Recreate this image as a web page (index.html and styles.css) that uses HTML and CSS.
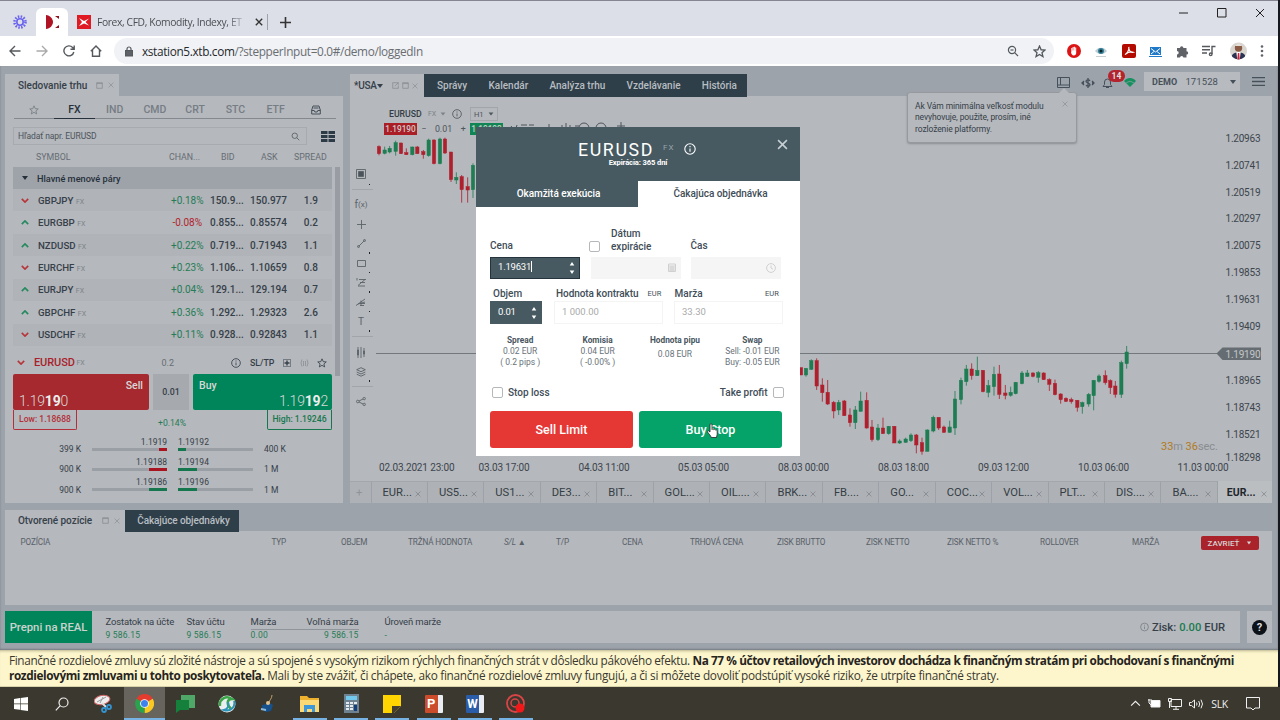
FILE: index.html
```html
<!DOCTYPE html>
<html lang="sk">
<head>
  <meta charset="UTF-8">
  <title>xStation 5</title>
  <link rel="stylesheet" href="styles.css">
</head>
<body>
  <!-- Shared icons -->
  <svg class="defs">
    <symbol id="i-info" viewBox="0 0 12 12"><circle cx="6" cy="6" r="5.2"/><path d="M6 5.4v3.4M6 3v1.2"/></symbol>
    <symbol id="i-x" viewBox="0 0 10 10"><path d="M1 1l8 8M9 1l-8 8"/></symbol>
    <symbol id="i-max" viewBox="0 0 10 10"><path d="M1 1h8v8H1zM1 2.2h8"/></symbol>
    <symbol id="i-up" viewBox="0 0 10 6"><path d="M1 5l4-4 4 4"/></symbol>
    <symbol id="i-down" viewBox="0 0 10 6"><path d="M1 1l4 4 4-4"/></symbol>
    <symbol id="i-star" viewBox="0 0 12 12"><path d="M6 1l1.5 3.4 3.6.3-2.8 2.4.9 3.6L6 8.8l-3.200 1.900.9-3.600L.9 4.700l3.600-.3z"/></symbol>
    <symbol id="i-find" viewBox="0 0 12 12"><circle cx="5" cy="5" r="3.600"/><path d="M7.700 7.700L11 11"/></symbol>
  </svg>

  <div class="browser">
    <div class="tabstrip">
      <div class="pin"><svg width="14" height="14" viewBox="-7 -7 14 14" fill="none" stroke="#6a63ee" stroke-width="1.600"><circle r="3.200"/><circle r="5.500" stroke-dasharray="1.500 1.380" stroke-width="2.600"/></svg></div>
      <div class="tab-active"><svg width="15" height="14" viewBox="0 0 15 14" stroke="none"><path d="M1 0c4 0 7 4 7 7s-3 7-7 7z" fill="#b01324"/><path d="M10 1h4v3zM10 13h4v-3z" fill="#8e1322"/></svg></div>
      <div class="tab">
        <svg width="14" height="14" viewBox="0 0 14 14" stroke="none"><path fill="#e01a22" d="M0 0h14v14H0z"/><path fill="#fff" d="M2 3l5 3 5-2.500L8.500 7l3.500 3.500L7 8.500 2 11l3-4z"/></svg>
        <span class="tab-title">Forex, CFD, Komodity, Indexy, ET</span>
        <svg class="tab-close" width="8" height="8"><use href="#i-x"/></svg>
      </div>
      <svg class="tab-new" width="11" height="11" viewBox="0 0 11 11"><path d="M5.500 0v11M0 5.500h11"/></svg>
      <div class="win-controls">
        <svg width="10" height="10" viewBox="0 0 10 10"><path d="M0 5h9"/></svg>
        <svg width="10" height="10" viewBox="0 0 10 10"><path d="M.5.5h8.500v8.500H.5z"/></svg>
        <svg width="10" height="10"><use href="#i-x"/></svg>
      </div>
    </div>
    <div class="toolbar">
      <svg width="12" height="12" viewBox="0 0 12 12"><path d="M11.500 6H1M6 1L1 6l5 5"/></svg>
      <svg class="off" width="12" height="12" viewBox="0 0 12 12"><path d="M.5 6H11M6 1l5 5-5 5"/></svg>
      <svg width="12" height="12" viewBox="0 0 12 12"><path d="M10.800 7A5 5 0 1 1 9.600 2.500L11 4M11.200.5V4.300H7.500"/></svg>
      <svg width="12" height="12" viewBox="0 0 12 12"><path d="M.8 6.300L6 1l5.200 5.300M2.500 5v6.200h7V5"/></svg>
      <div class="omnibox">
        <svg width="8" height="11" viewBox="0 0 8 11"><path d="M.5 4.500h7v5.500h-7z" fill="#5f6368"/><path d="M2 4.500V3a2 2 0 0 1 4 0v1.500"/></svg>
        <span class="url"><b>xstation5.xtb.com</b>/?stepperInput=0.0#/demo/loggedIn</span>
        <svg width="12" height="12" viewBox="0 0 12 12"><use href="#i-find"/><path d="M3.500 5h3"/></svg>
        <svg width="13" height="13"><use href="#i-star"/></svg>
      </div>
      <div class="extensions">
        <svg width="14" height="14" viewBox="0 0 14 14" stroke="none"><circle cx="7" cy="7" r="7" fill="#dc1414"/><path fill="#fff" d="M4.300 8V4h1v2.500h.3V3h1v3.500h.3V2.800h1v3.700h.3V3.500h1V9c0 1.500-1 2.500-2.500 2.500S4.300 10 4 8z"/></svg>
        <svg width="14" height="14" viewBox="0 0 14 14" stroke="none"><path fill="#b9ccd4" d="M1 7c3-4.500 9-4.500 12 0-3 4-9 4-12 0z"/><circle cx="7" cy="7" r="3" fill="#317f98"/><circle cx="7" cy="7" r="1.500" fill="#122"/><path fill="#c8cfd2" d="M2 12h10v1H2z"/></svg>
        <svg width="14" height="14" viewBox="0 0 14 14"><rect width="14" height="14" rx="2" fill="#b30b00" stroke="none"/><path stroke="#fff" stroke-width="1.200" d="M3 10.500c2-.5 4.500-5 3.800-7.500-.5 3 2 6 4.500 5.200-2-.6-5.300 0-8.300 2.300z"/></svg>
        <svg width="13" height="12" viewBox="0 0 13 12"><path fill="#1f78c8" stroke="none" d="M1 2h11v8H1zM0 11h13v1H0z"/><path stroke="#fff" stroke-width="1" d="M2 3.500l4.500 3.500L11 3.500M2 9l3-2.500M11 9L8 6.500"/></svg>
        <svg width="13" height="13" viewBox="0 0 13 13" stroke="none"><path fill="#5f6368" d="M1 3h3a1.700 1.700 0 1 1 3.400 0h3.100v3.200a1.700 1.700 0 1 1 0 3.400v3H7.400a1.700 1.700 0 0 0-3.400 0H1V9.400a1.700 1.700 0 0 0 0-3.400z"/></svg>
        <svg width="14" height="12" viewBox="0 0 14 12"><path d="M0 1.500h8M0 4.700h8M0 8h5M10 9V1.500h3.500"/><circle cx="8.700" cy="9.300" r="1.300"/></svg>
        <svg width="17" height="18" viewBox="0 0 17 18" stroke="none"><clipPath id="av"><circle cx="8.500" cy="9" r="8.500"/></clipPath><g clip-path="url(#av)"><path fill="#d9d5cf" d="M0 0h17v18H0z"/><path fill="#2b3352" d="M1 18c0-6 3-7.500 7.500-7.500S16 12 16 18z"/><path fill="#fff" d="M6.300 10h4.400l-1 8H7.300z"/><path fill="#d01f36" d="M7.900 11h1.300l.6 7H7.200z"/><circle cx="8.500" cy="6" r="3.700" fill="#8a5a45"/><path fill="#e4e0dc" d="M5 4c1-3 6-3 7 0z"/></g></svg>
        <svg width="4" height="12" viewBox="0 0 4 12" stroke="none" fill="#5f6368"><circle cx="2" cy="1.500" r="1.300"/><circle cx="2" cy="6" r="1.300"/><circle cx="2" cy="10.500" r="1.300"/></svg>
      </div>
    </div>
  </div>

  <div class="app">
    <div class="workspace">
      <!-- Market watch -->
      <section class="market">
        <div class="panel-tab">Sledovanie trhu <svg width="7" height="7"><use href="#i-max"/></svg><svg width="6" height="6"><use href="#i-x"/></svg></div>
        <div class="panel market-panel">
          <div class="categories">
            <span><svg width="10" height="10"><use href="#i-star"/></svg></span>
            <span class="current">FX</span><span>IND</span><span>CMD</span><span>CRT</span><span>STC</span><span>ETF</span>
            <span class="inbox"><svg width="10" height="10" viewBox="0 0 10 10"><path d="M.7 5L2 1h6l1.300 4v4H.7zM.7 5.500h2.500l.7 1.500h2.200l.7-1.500h2.500M2.500 3h5"/></svg></span>
          </div>
          <div class="search-row">
            <div class="search">Hľadať napr. EURUSD <svg width="9" height="9"><use href="#i-find"/></svg></div>
            <svg width="14" height="11" viewBox="0 0 14 11" stroke="none"><path fill="#2c3b46" d="M0 0h6.500v3H0zM7.500 0H14v3H7.500zM0 4h6.500v3H0zM7.500 4H14v3H7.500zM0 8h6.500v3H0zM7.500 8H14v3H7.500z"/></svg>
          </div>
          <div class="list-head"><span>SYMBOL</span><span>CHAN...</span><span>BID</span><span>ASK</span><span>SPREAD</span></div>
          <div class="list-wrap">
            <div class="list">
              <div class="group"><i class="caret"></i>Hlavné menové páry</div>
              <div class="row"><svg class="dn"><use href="#i-down"/></svg><span>GBPJPY <small>FX</small></span><span class="pos">+0.18%</span><span>150.9...</span><span>150.977</span><span>1.9</span></div>
              <div class="row"><svg class="up"><use href="#i-up"/></svg><span>EURGBP <small>FX</small></span><span class="neg">-0.08%</span><span>0.855...</span><span>0.85574</span><span>0.2</span></div>
              <div class="row"><svg class="up"><use href="#i-up"/></svg><span>NZDUSD <small>FX</small></span><span class="pos">+0.22%</span><span>0.719...</span><span>0.71943</span><span>1.1</span></div>
              <div class="row"><svg class="dn"><use href="#i-down"/></svg><span>EURCHF <small>FX</small></span><span class="pos">+0.23%</span><span>1.106...</span><span>1.10659</span><span>0.8</span></div>
              <div class="row"><svg class="up"><use href="#i-up"/></svg><span>EURJPY <small>FX</small></span><span class="pos">+0.04%</span><span>129.1...</span><span>129.194</span><span>0.7</span></div>
              <div class="row"><svg class="up"><use href="#i-up"/></svg><span>GBPCHF <small>FX</small></span><span class="pos">+0.36%</span><span>1.292...</span><span>1.29323</span><span>2.6</span></div>
              <div class="row"><svg class="dn"><use href="#i-down"/></svg><span>USDCHF <small>FX</small></span><span class="pos">+0.11%</span><span>0.928...</span><span>0.92843</span><span>1.1</span></div>
              <div class="selected">
                <svg class="dn"><use href="#i-down"/></svg><b>EURUSD</b><small>FX</small><span class="sel-spread">0.2</span>
                <svg width="10" height="10"><use href="#i-info"/></svg><span class="sltp">SL/TP</span>
                <svg width="8" height="8" viewBox="0 0 8 8"><path d="M.5.5h7v7h-7z" stroke-dasharray="1 1"/><path d="M4 1.500v5M1.500 4h5" stroke-width="1.400"/></svg>
                <svg class="faint" width="9" height="8" viewBox="0 0 9 8"><path d="M2 .5Q0 4 2 7.500M7 .5q2 3.500 0 7M3.500 2v5M5.500 2v5"/></svg>
                <svg width="10" height="10"><use href="#i-star"/></svg>
              </div>
            </div>
            <div class="scrollbar"></div>
          </div>
          <div class="ticket">
            <div class="side sell"><span>Sell</span><em>1.19<b>19</b>0</em></div>
            <div class="lots">0.01</div>
            <div class="side buy"><span>Buy</span><em>1.19<b>19</b>2</em></div>
          </div>
          <div class="range"><span class="low">Low: 1.18688</span><span class="day">+0.14%</span><span class="high">High: 1.19246</span></div>
          <div class="depth">
            <div class="level"><span>399 K</span><div class="bar ask"><span>1.1919</span><i class="r" style="width:8px"></i></div><div class="bar"><span>1.19192</span><i style="width:8px"></i></div><span>400 K</span></div>
            <div class="level"><span>900 K</span><div class="bar ask"><span>1.19188</span><i class="r" style="width:18px"></i></div><div class="bar"><span>1.19194</span><i style="width:19px"></i></div><span>1 M</span></div>
            <div class="level"><span>900 K</span><div class="bar ask"><span>1.19186</span><i style="width:18px"></i></div><div class="bar"><span>1.19196</span><i style="width:19px"></i></div><span>1 M</span></div>
          </div>
        </div>
      </section>

      <!-- Chart -->
      <section class="chart">
        <div class="chart-top">
          <div class="panel-tab usa">*USA<i class="caret"></i><svg width="7" height="7" viewBox="0 0 10 10"><path d="M6 1H1v8h8V5M4 6l5-5M6 1h3v3"/></svg><svg width="7" height="7"><use href="#i-max"/></svg><svg width="6" height="6"><use href="#i-x"/></svg></div>
          <nav class="menu"><span>Správy</span><span>Kalendár</span><span>Analýza trhu</span><span>Vzdelávanie</span><span>História</span></nav>
          <div class="account">
            <svg width="13" height="11" viewBox="0 0 13 11"><path d="M.5.5h12v10H.5zM3.500.5v7.500M.5 8h12"/></svg>
            <svg width="14" height="12" viewBox="0 0 14 12"><path d="M3 4L1 6l2 2M11 4l2 2-2 2M9 3.800C8 2.300 5 2.500 5 4.300s4 1.600 4 3.500S6 9.700 5 8.200M7 1v10M1 6h2M11 6h2" stroke-width="1.300"/></svg>
            <div class="bell"><svg width="11" height="12" viewBox="0 0 11 12"><path d="M1 9.500h9L8.500 7.500V5a3 3 0 0 0-6 0v2.500zM4 10.500h3"/></svg><span class="badge">14</span></div>
            <svg class="wifi" width="12" height="9" viewBox="0 0 12 9" stroke="none"><path fill="#159160" d="M0 3c3-4 9-4 12 0L6 9z"/><path d="M2.300 4.700q3.700-3 7.400 0" fill="none" stroke="#9da3ab" stroke-width=".7"/></svg>
            <div class="account-box"><b>DEMO</b><span>171528</span><i class="caret"></i></div>
            <svg class="burger" width="13" height="9" viewBox="0 0 13 9"><path d="M0 .7h13M0 4.500h13M0 8.300h13"/></svg>
          </div>
        </div>
        <div class="panel chart-panel">
          <div class="chart-body">
            <div class="draw-tools">
              <span class="first more"><svg width="10" height="10" viewBox="0 0 10 10"><path d="M.5.5h9v9h-9z"/><path d="M2.500 2.500h5v5h-5z" fill="#4c545b"/></svg></span>
              <hr>
              <span class="fx">f<small>(x)</small></span>
              <span><svg width="9" height="9" viewBox="0 0 9 9"><path d="M4.500 0v9M0 4.500h9"/></svg></span>
              <span class="more"><svg width="9" height="9" viewBox="0 0 9 9"><path d="M1.500 7.500l6-6"/><circle cx="1.500" cy="7.500" r="1"/><circle cx="7.500" cy="1.500" r="1"/></svg></span>
              <span class="more"><svg width="9" height="7" viewBox="0 0 9 7"><path d="M.5.5h8v6h-8z"/></svg></span>
              <span class="more"><svg width="10" height="9" viewBox="0 0 10 9"><path d="M1 0v2.500M3 1.500h7M9 1.500L2 7.500M4 4.500h5M2 8h7"/></svg></span>
              <span class="more"><svg width="10" height="9" viewBox="0 0 10 9"><path d="M0 7.500L9 1M2 6l7-2M4 5.500h5M4 7.500h4M5 2.500v5"/></svg></span>
              <span class="more t">T</span>
              <hr>
              <span><svg width="10" height="11" viewBox="0 0 10 11"><path d="M2 0v11M5 0v11M8 1v9"/><path d="M1.500 3h1v5h-1zM7.500 4h1v3h-1z"/></svg></span>
              <span class="more"><svg width="10" height="10" viewBox="0 0 10 10"><path d="M5 .7l4.300 2L5 4.700l-4.300-2zM.7 5L5 7l4.300-2M.7 7.200l4.300 2 4.300-2"/></svg></span>
              <hr>
              <span><svg width="10" height="9" viewBox="0 0 10 9"><circle cx="1.800" cy="4.500" r="1.300"/><circle cx="8.200" cy="1.600" r="1.200"/><circle cx="8.200" cy="7.400" r="1.200"/><path d="M3 4l4-2M3 5l4 2"/></svg></span>
            </div>
            <svg class="plot" id="plot" width="896" height="385" viewBox="376 96 896 385">
              <path class="price-line" d="M376 353.500H1222"/>
              <path class="price-tag" d="M1216.500 353.500l6-6H1261v12.500h-38.500z"/>
            </svg>
            <div class="chart-head">
              <div class="chart-symbol"><b>EURUSD</b><small>FX</small><i class="caret"></i><svg width="10" height="10"><use href="#i-info"/></svg><span class="interval">H1<i class="caret"></i></span></div>
              <div class="quick"><span class="q-sell">1.19190</span><span>−</span><span class="q-lots">0.01</span><span>+</span><span class="q-buy">1.19192</span>
                <svg width="120" height="12" viewBox="0 0 120 12"><path d="M2 4l4 5 2-6M12 3h6M20 3h5M40 2v8M53 3v8M57 1v8M61 3v5M66 4h4"/><circle cx="75" cy="6" r="5"/><circle cx="92" cy="6" r="5"/><path d="M112 0v10M108 4h8"/></svg>
              </div>
            </div>
          </div>
          <div class="chart-tabs">
            <span class="add">+</span>
            <span>EUR...<svg><use href="#i-x"/></svg></span><span>US5...<svg><use href="#i-x"/></svg></span><span>US1...<svg><use href="#i-x"/></svg></span><span>DE3...<svg><use href="#i-x"/></svg></span><span>BIT...<svg><use href="#i-x"/></svg></span><span>GOL...<svg><use href="#i-x"/></svg></span><span>OIL....<svg><use href="#i-x"/></svg></span><span>BRK...<svg><use href="#i-x"/></svg></span><span>FB....<svg><use href="#i-x"/></svg></span><span>GO...<svg><use href="#i-x"/></svg></span><span>COC...<svg><use href="#i-x"/></svg></span><span>VOL...<svg><use href="#i-x"/></svg></span><span>PLT...<svg><use href="#i-x"/></svg></span><span>DIS....<svg><use href="#i-x"/></svg></span><span>BA....<svg><use href="#i-x"/></svg></span><span class="on">EUR...<svg><use href="#i-x"/></svg></span>
          </div>
        </div>
      </section>
    </div>

    <!-- Positions -->
    <section class="positions">
      <div class="pos-tabs"><div class="panel-tab">Otvorené pozície <svg width="7" height="7"><use href="#i-max"/></svg><svg width="6" height="6"><use href="#i-x"/></svg></div><div class="pending">Čakajúce objednávky</div></div>
      <div class="panel pos-head">
        <span>POZÍCIA</span><span>TYP</span><span>OBJEM</span><span>TRŽNÁ HODNOTA</span><span><i>S/L</i> ▲</span><span>T/P</span><span>CENA</span><span>TRHOVÁ CENA</span><span>ZISK BRUTTO</span><span>ZISK NETTO</span><span>ZISK NETTO %</span><span>ROLLOVER</span><span>MARŽA</span><button>ZAVRIEŤ<i class="caret"></i></button>
      </div>
    </section>

    <footer class="status">
      <div class="panel balance">
        <div class="real">Prepni na REAL</div>
        <div class="stat s1"><span>Zostatok na účte</span><em>9 586.15</em></div>
        <div class="stat s2"><span>Stav účtu</span><em>9 586.15</em></div>
        <div class="stat s3"><span>Marža</span><em>0.00</em></div>
        <div class="stat s4"><span>Voľná marža</span><em>9 586.15</em></div>
        <div class="stat s5"><span>Úroveň marže</span><em>-</em></div>
        <div class="profit"><svg width="9" height="10"><use href="#i-info"/></svg>Zisk: <em>0.00</em> EUR</div>
      </div>
      <div class="panel help"><b>?</b></div>
    </footer>

    <div class="tooltip">Ak Vám minimálna veľkosť modulu<br>nevyhovuje, použite, prosím, iné<br>rozloženie platformy.<svg width="6" height="6"><use href="#i-x"/></svg></div>

    <!-- Order window -->
    <div class="modal">
      <header>
        <div class="title"><h1>EURUSD</h1><small>FX</small><svg width="12" height="12"><use href="#i-info"/></svg></div>
        <p>Expirácia: 365 dní</p>
        <svg class="close" width="11" height="11"><use href="#i-x"/></svg>
      </header>
      <div class="modal-tabs"><span>Okamžitá exekúcia</span><span class="on">Čakajúca objednávka</span></div>
      <div class="form">
        <div class="labels l1"><label>Cena</label><i class="check"></i><label class="two">Dátum<br>expirácie</label><label>Čas</label></div>
        <div class="fields f1">
          <div class="input dark">1.19631<i class="text-cursor"></i><svg class="spin" width="6" height="14" viewBox="0 0 6 14" stroke="none" fill="#fff"><path d="M3 1l2.300 3.500H.7zM3 13L.7 9.500h4.600z"/></svg></div>
          <div class="input off"><svg width="8" height="9" viewBox="0 0 8 9"><path d="M.5 1h7v7.500h-7zM.5 3h7M.5 5h7M.5 7h7M3 3v5M5 3v5"/></svg></div>
          <div class="input off"><svg width="10" height="10" viewBox="0 0 10 10"><circle cx="5" cy="5" r="4.400"/><path d="M5 2.500V5l2 1.300"/></svg></div>
        </div>
        <div class="labels l2"><label>Objem</label><label>Hodnota kontraktu</label><small>EUR</small><label>Marža</label><small>EUR</small></div>
        <div class="fields f2">
          <div class="input dark">0.01<svg class="spin" width="6" height="14" viewBox="0 0 6 14" stroke="none" fill="#fff"><path d="M3 1l2.300 3.500H.7zM3 13L.7 9.500h4.600z"/></svg></div>
          <div class="input ro">1 000.00</div>
          <div class="input ro">33.30</div>
        </div>
        <div class="costs">
          <div><b>Spread</b><span>0.02 EUR</span><span>( 0.2 pips )</span></div>
          <div><b>Komisia</b><span>0.04 EUR</span><span>( -0.00% )</span></div>
          <div class="pip"><b>Hodnota pipu</b><span>0.08 EUR</span></div>
          <div><b>Swap</b><span>Sell: -0.01 EUR</span><span>Buy: -0.05 EUR</span></div>
        </div>
        <div class="stops"><i class="check"></i><label>Stop loss</label><label class="tp">Take profit</label><i class="check"></i></div>
        <div class="actions"><button class="red">Sell Limit</button><button class="green">Buy Stop</button></div>
      </div>
      <svg class="hand" width="11" height="16" viewBox="0 0 11 16" fill="#fff" stroke="#222"><path d="M3 9V1.800a1 1 0 0 1 2 0V6.500c.3-.8 1.700-.7 1.800.2.4-.7 1.600-.5 1.700.4.500-.5 1.700-.2 1.700.8v3.500c0 1-.7 1.600-.7 3.100H4.200c0-1.500-2.800-4-3.700-5.500-.5-1 .6-1.700 1.400-.9z"/></svg>
    </div>
  </div>

  <div class="disclaimer">
    <p class="d1">Finančné rozdielové zmluvy sú zložité nástroje a sú spojené s vysokým rizikom rýchlych finančných strát v dôsledku pákového efektu. <b>Na 77 % účtov retailových investorov dochádza k finančným stratám pri obchodovaní s finančnými</b></p>
    <p class="d2"><b>rozdielovými zmluvami u tohto poskytovateľa.</b> Mali by ste zvážiť, či chápete, ako finančné rozdielové zmluvy fungujú, a či si môžete dovoliť podstúpiť vysoké riziko, že utrpíte finančné straty.</p>
  </div>

  <div class="taskbar">
    <span><svg width="14" height="14" viewBox="0 0 14 14" fill="#fff" stroke="none"><path d="M0 2l6-.9v5.500H0zM6.600 1L14 0v6.600H6.600zM0 7.200h6v5.500L0 12zM6.600 7.200H14V14l-7.400-1z"/></svg></span>
    <span><svg width="14" height="14" viewBox="0 0 14 14" fill="none" stroke="#eee" stroke-width="1.200"><circle cx="8.500" cy="5.500" r="4.500"/><path d="M5.300 8.700L.8 13.300"/></svg></span>
    <span><svg width="18" height="20" viewBox="0 0 18 20" stroke="none"><ellipse cx="8" cy="6" rx="8" ry="4.500" fill="#eee" stroke="#c66" transform="rotate(-12 8 6)"/><path d="M3 8L12 3M6 9l3-6" stroke="#999"/><path d="M8 9l4 4" stroke="#ddd" stroke-width="2"/><g fill="none" stroke="#3393cf" stroke-width="1.800"><circle cx="10" cy="16" r="2"/><circle cx="15" cy="13" r="2"/></g></svg></span>
    <span class="open active"><svg width="19" height="19" viewBox="0 0 20 20" stroke="none"><path fill="#e33b2e" d="M10 10L1.500 5A10 10 0 0 1 18.700 5z"/><path fill="#f9c922" d="M10 10l8.700-5A10 10 0 0 1 10 20z"/><path fill="#2ba24c" d="M10 10v10A10 10 0 0 1 1.500 5z"/><circle cx="10" cy="10" r="4.600" fill="#fff"/><circle cx="10" cy="10" r="3.700" fill="#3f82ee"/></svg></span>
    <span><svg width="19" height="18" viewBox="0 0 19 18" stroke="none"><path fill="#50a868" d="M5 0h14v13H5z"/><path fill="#14803c" d="M0 5h13v10H4l-4 3z"/></svg></span>
    <span><svg width="18" height="18" viewBox="0 0 18 18" stroke="none"><circle cx="9" cy="9" r="8.500" fill="#e9eef0"/><path d="M2 11C1 4 8 0 14 4c-5 0-6 5-1 10" fill="none" stroke="#3aa648" stroke-width="2.500"/><path d="M16 6c2 6-4 11-10 9 4-1 5-4 4-8" fill="none" stroke="#2c94b8" stroke-width="2"/></svg></span>
    <span><svg width="16" height="18" viewBox="0 0 16 18" stroke="none"><path d="M12 0c0 4-3 5-3 8" stroke="#c9a26c" fill="none"/><path fill="#17518c" d="M2 10c3 0 4-2 6-3l5 3-2 6-5 1-4-3z"/><circle cx="8" cy="8" r="2" fill="#dfc28e"/><path d="M1 14l5 1" stroke="#8db9dc" stroke-width="2"/></svg></span>
    <span class="open"><svg width="19" height="16" viewBox="0 0 19 16" stroke="none"><path fill="#eeb02f" d="M0 0h7l2 2h10v14H0z"/><path fill="#fbd976" d="M0 4h19v12H0z"/><path fill="#3d97d8" d="M4 9h11v7h-3v-3H7v3H4z"/></svg></span>
    <span class="open"><svg width="15" height="19" viewBox="0 0 15 19" stroke="none"><path fill="#6d8190" d="M0 0h15v19H0z"/><path fill="#72c8ed" d="M2 2h11v4H2z"/><path fill="#e3e9ec" d="M2 8h3v2H2zM6 8h3v2H6zM10 8h3v2h-3zM2 11h3v2H2zM6 11h3v2H6zM2 14h3v2H2zM6 14h3v2H6z"/><path fill="#123f78" d="M10 11h3v6h-3z"/></svg></span>
    <span class="open"><svg width="18" height="18" viewBox="0 0 18 18" stroke="none"><path fill="#ffd400" d="M0 0h18v11l-7 7H0z"/><path fill="#443d32" d="M9 11h9l-7 7H9z"/></svg></span>
    <span class="open"><span class="office ppt">P</span></span>
    <span class="open"><span class="office word">W</span></span>
    <span class="open"><svg width="20" height="20" viewBox="0 0 20 20" stroke="none"><circle cx="9.500" cy="9.500" r="8.500" fill="none" stroke="#d94545" stroke-width="1.800"/><circle cx="9" cy="9" r="4" fill="none" stroke="#d94545" stroke-width="1.500"/><circle cx="14" cy="14" r="4.500" fill="#f01818"/></svg></span>
    <div class="tray">
      <svg width="11" height="7"><use href="#i-up"/></svg>
      <svg width="13" height="9" viewBox="0 0 13 9"><path d="M3 1.500h9v6.500H3z" fill="#fff"/><path d="M0 1h4M1 0v4M1 4l2 2"/></svg>
      <svg width="14" height="12" viewBox="0 0 14 12"><path d="M3 1.500h10.500v7H3zM.5.5h3v3h-3zM8 8.500V11M5 11.300h6M1.500 4v6"/></svg>
      <svg width="15" height="10" viewBox="0 0 15 10"><path d="M.5 3.500h2L5.500 1v8l-3-2.500h-2zM7.500 3.500q1 1.500 0 3M9.700 2q2 3 0 6M12 .7q3 4.300 0 8.600"/></svg>
      <b>SLK</b>
      <svg width="14" height="14" viewBox="0 0 14 14"><path d="M.5.5h13v10.500H9L7 13l-2-2H.5z"/></svg>
    </div>
  </div>
  <script src="chart.js"></script>
</body>
</html>
```
FILE: styles.css
```css
:root {
  --bg: #9da3ab;
  --panel: #b5b8bc;
  --dark: #2f3f49;
  --slate: #475a62;
  --text: #36404a;
  --muted: #666e76;
}

* {
  margin: 0;
  padding: 0;
  box-sizing: border-box;
}

body {
  width: 1280px;
  height: 720px;
  overflow: hidden;
  display: flex;
  flex-direction: column;
  background: #14171d;
  color: var(--text);
  font-family: Roboto, "Liberation Sans", sans-serif;
  font-size: 10px;
  white-space: nowrap;
}

.defs { position: absolute; width: 0; height: 0; }
svg { flex: none; display: block; }
svg:not([fill]) { fill: none; }
svg:not([stroke]) { stroke: currentColor; }
em, i { font-style: normal; }
b { font-weight: 500; }

.caret {
  display: inline-block;
  border: 3px solid transparent;
  border-top: 4px solid currentColor;
  border-bottom: 0;
}

/* Browser */
.browser {
  width: 1278px;
  height: 66px;
  border-top: 1px solid #858592;
  font-family: "Open Sans", "Noto Sans", sans-serif;
  color: #4b4f54;
}

.tabstrip {
  height: 35px;
  background: #dcdfe7;
  display: flex;
  align-items: center;
  padding-top: 7px;
}

.pin { width: 36px; padding-left: 13px; }

.tab-active {
  width: 32px;
  height: 28px;
  border-radius: 6px 6px 0 0;
  background: #fff;
  display: flex;
  align-items: center;
  justify-content: center;
}

.tab {
  display: flex;
  align-items: center;
  width: 200px;
  height: 16px;
  padding-left: 9px;
  border-right: 1px solid #9ea2a9;
}

.tab-title {
  width: 150px;
  margin: 0 8px 0 6px;
  font-size: 10.300px;
  letter-spacing: -0.380px;
  -webkit-mask-image: linear-gradient(90deg, #000 86%, rgba(0, 0, 0, 0.3) 97%);
}

.tab-close { color: #333; stroke-width: 1.700; }
.tab-new { margin-left: 12px; color: #333; stroke-width: 1.600; }

.win-controls {
  display: flex;
  gap: 28px;
  margin: -18px 13px 0 auto;
  color: #222;
}

.toolbar {
  height: 30px;
  background: #fff;
  display: flex;
  align-items: center;
  gap: 15px;
  padding-left: 9px;
  color: #55595e;
  stroke-width: 1.400;
}

.toolbar .off { color: #aaa; }

.omnibox {
  display: flex;
  align-items: center;
  gap: 14px;
  width: 940px;
  height: 26px;
  margin-left: -3px;
  padding: 0 8px 0 11px;
  border-radius: 13px;
  background: #f0f2f5;
}

.omnibox svg { stroke-width: 1.200; }
.url { margin-left: -5px; margin-right: auto; font-size: 11.800px; letter-spacing: -0.340px; color: #6a6d72; }
.url b { font-weight: 400; color: #25282c; }

.extensions {
  display: flex;
  align-items: center;
  justify-content: space-between;
  width: 197px;
  margin-left: -2px;
}

/* Trading platform */
.app {
  position: relative;
  width: 1278px;
  height: 584px;
  background: var(--bg);
  padding: 8px 6px 7px 5px;
  box-shadow: inset 0 -1px 2px #777b80;
}

.workspace { display: flex; gap: 7px; height: 429px; }
.market { width: 338px; }
.chart { width: 922px; }
.panel { background: var(--panel); }

.panel-tab {
  display: flex;
  align-items: center;
  gap: 5px;
  width: 114px;
  height: 22px;
  padding-left: 13px;
  background: var(--panel);
  font-weight: 500;
}

.panel-tab svg { color: #858a90; }
.panel-tab svg:first-of-type { margin-left: 4px; }

.market-panel { height: 407px; padding: 4px 3px 0 8px; }

.categories {
  display: flex;
  height: 19px;
  margin: 0 4px 0 1px;
  border-bottom: 1px solid #83898f;
  font-size: 10.500px;
  font-weight: 500;
  color: #757d85;
}

.categories span {
  flex: 1;
  height: 19px;
  display: flex;
  align-items: center;
  justify-content: center;
}

.categories .current { color: #26313b; border-bottom: 1px solid #26313b; }
.inbox { color: #46505a; }

.search-row { display: flex; align-items: center; gap: 14px; margin-top: 8px; }

.search {
  display: flex;
  align-items: center;
  justify-content: space-between;
  width: 294px;
  height: 18px;
  padding: 0 6px 0 4px;
  border: 1px solid #a7abb0;
  font-size: 8.500px;
  letter-spacing: -0.100px;
  color: #4c545c;
}

.list-head {
  display: grid;
  grid-template-columns: 133px 52px 40px 33px auto;
  height: 22px;
  padding-left: 23px;
  line-height: 25px;
  font-size: 8.800px;
  color: #666d75;
}

.list-wrap { display: flex; gap: 3px; }
.list { width: 319px; height: 208px; }
.scrollbar { width: 5px; height: 209px; background: #999da3; }

.group {
  display: flex;
  align-items: center;
  gap: 9px;
  height: 22px;
  padding-left: 9px;
  background: #9ea3aa;
  color: #26303a;
  font-weight: 500;
  font-size: 9.200px;
}

.row {
  display: grid;
  grid-template-columns: 17px 133px 39px 34px 43px 31px;
  align-items: center;
  height: 22.430px;
  padding-left: 8px;
  font-size: 10px;
  font-weight: 500;
  text-align: right;
}

.row:nth-child(even) { background: #b0b3b7; }
.row span:nth-child(2), .row span:nth-child(4) { text-align: left; }
.row span:nth-child(2) { font-size: 9.700px; }
.row span:nth-child(3) { padding-right: 8px; }
.row small, .selected small, .chart-symbol small { font-size: 7px; font-weight: 400; color: #7c838a; }
.up, .dn { width: 8px; height: 5px; stroke-width: 2; }
.up { color: #238a5d; }
.dn { color: #b73439; }
.row .pos { color: #257c56; font-weight: 400; }
.row .neg { color: #b0252f; font-weight: 400; }

.selected { display: flex; align-items: center; height: 30px; padding: 4px 5px 0 4px; }
.selected > b { width: 47px; margin-left: 9px; font-size: 11px; letter-spacing: -0.100px; color: #a91f2b; }
.sel-spread { width: 77px; margin-left: 77px; font-size: 9px; color: var(--muted); }
.selected small { width: 8px; }
.sltp { width: 22px; margin: 0 11px 0 9px; font-size: 8.800px; font-weight: 500; }
.selected .faint { margin: 0 8px 0 9px; color: #92979d; }

.ticket { display: flex; height: 36px; margin-top: -2px; color: #d8d8d8; }
.side { display: flex; flex-direction: column; height: 36px; padding: 5px 6px 0; border-radius: 2px; line-height: 14px; }
.side span { font-size: 10.500px; font-weight: 500; }
.side em { font-size: 14px; font-weight: 300; line-height: 16px; letter-spacing: -0.200px; }
.side em b { font-weight: 700; color: #eee; }
.sell { width: 136px; background: #a5292e; }
.sell span { text-align: right; }
.buy { width: 139px; background: #00855a; }
.buy em { text-align: right; margin-right: -2px; }
.lots { width: 36px; margin: 0 4px; background: #a6a9ae; color: var(--text); font-size: 8.800px; font-weight: 500; line-height: 37px; text-align: center; }

.range { display: flex; justify-content: space-between; width: 319px; height: 20px; font-size: 8.600px; font-weight: 500; line-height: 19px; }
.low, .high { width: 64px; border: 1px solid; border-top: 0; border-radius: 0 0 2px 2px; text-align: center; }
.low { color: #b3303a; }
.high { width: 65px; color: #16774e; }
.day { padding: 4px 0 0 0; font-weight: 400; color: #257c56; }

.depth { padding: 9px 0 0 1px; font-size: 8.500px; }
.level { display: grid; grid-template-columns: 67px 75px 75px 40px; column-gap: 11px; align-items: center; height: 20.300px; }
.level > span:first-child { text-align: right; }
.bar { position: relative; height: 3px; background: #999fa4; display: flex; }
.bar.ask { justify-content: flex-end; }
.bar span { position: absolute; top: -11px; }
.bar i { height: 3px; background: #16774e; }
.bar i.r { background: #a81420; }

/* Chart */
.chart-top { display: flex; height: 22px; }
.usa { width: 74px; padding-left: 4px; gap: 3px; height: 23px; letter-spacing: -0.300px; }
.usa .caret { margin-left: -2px; }
.panel-tab.usa svg:first-of-type { margin-left: 6px; }
.menu { display: flex; justify-content: space-between; width: 323px; height: 23px; padding: 0 10px 0 13px; background: var(--dark); color: #b8bdc1; line-height: 23px; font-weight: 500; z-index: 1; }

.account { display: flex; align-items: center; height: 19px; margin: -2px 7px 0 auto; color: #46505a; }
.account > svg:nth-child(1) { margin-top: 2px; }
.account > svg:nth-child(2) { margin: 2px 7px 0 11px; }
.bell { position: relative; margin-top: 2px; }
.badge { position: absolute; left: 6px; top: -7px; width: 17px; height: 12px; border-radius: 6px; background: #b3242f; color: #ddd; font-size: 8.500px; font-weight: 700; line-height: 12px; text-align: center; }
.account .wifi { margin: 1px 8px 0 11px; }
.account-box { display: flex; align-items: center; gap: 8px; width: 96px; height: 19px; padding-left: 8px; background: #b7babe; font-size: 9.500px; letter-spacing: 0.100px; }
.account-box b { font-weight: 700; font-size: 9px; }
.account-box .caret { margin-left: 4px; }
.burger { margin-left: 12px; stroke-width: 1.300; }

.chart-panel { height: 407px; }
.chart-body { position: relative; display: flex; height: 385px; }

.draw-tools { width: 26px; padding: 67px 3px 0 2px; color: #5a6269; stroke-width: 0.900; }
.draw-tools span { position: relative; display: flex; align-items: center; justify-content: center; width: 18px; height: 19.500px; }
.draw-tools .first { height: 22px; }
.draw-tools hr { border: 0; border-top: 1px solid #a2a6aa; margin: 4px 0 5px; }
.draw-tools hr:nth-of-type(2) { margin-bottom: 6px; }
.draw-tools .more::after { content: ""; position: absolute; right: 0; bottom: 0; width: 1.500px; height: 1.500px; background: #222; }
.fx { font-size: 10px; }
.fx small { font-size: 8px; }

svg.plot { stroke: none; }
.plot text { font-size: 10px; fill: #3c454e; }
.price-line { stroke: #73787d; }
.price-tag { fill: #666d72; }
.plot text.tag-text { fill: #c3c6c8; }
.g { fill: #1f7d53; stroke: #1f7d53; }
.r-c { fill: #ae202e; stroke: #ae202e; }

.chart-head { position: absolute; left: 34px; top: 10px; color: #4d555d; }
.chart-symbol { display: flex; align-items: center; height: 16px; padding-left: 5px; }
.chart-symbol b { width: 33px; font-size: 8.700px; font-weight: 500; color: #333c45; }
.chart-symbol small { width: 8px; margin: 0 4px 0 6px; }
.chart-symbol > .caret { margin-right: 6px; color: #7d8389; transform: scale(.8); }
.interval { margin-left: 8px; width: 28px; height: 14px; border: 1px solid #a2a6aa; font-size: 7.500px; line-height: 13px; padding-left: 3px; }
.interval .caret { margin-left: 4px; vertical-align: 1px; transform: scale(.8); }
.quick { display: flex; height: 12px; margin-top: 1px; line-height: 12px; font-size: 8.800px; }
.quick span { width: 13.500px; text-align: center; }
.quick .q-lots { width: 26px; }
.quick .q-sell, .quick .q-buy { width: 33px; font-weight: 500; background: #ab1e26; color: #ccc; font-size: 8.300px; }
.quick .q-buy { background: #128555; }
.quick svg { margin-left: 6px; margin-top: -1px; }

.chart-tabs { display: flex; height: 22px; }
.chart-tabs span { display: flex; align-items: center; justify-content: space-between; width: 56.430px; padding: 0 6px 1px 11px; background: #aeb2b6; border-left: 1px solid #9da2a8; border-top: 1px solid #a3a7ac; font-size: 11.200px; color: #353d45; }
.chart-tabs svg { width: 6px; height: 6px; color: #73797f; margin-top: 3px; }
.chart-tabs .add { width: 20.500px; padding: 0 0 0 6px; border-left: 0; color: #8e949a; }
.chart-tabs .on { flex: 1; padding: 0 5px 0 9px; background: #bbbec1; font-weight: 700; color: #20262c; border-top: 0; font-size: 10.500px; }

/* Positions */
.positions { margin-top: 7px; }
.pos-tabs { display: flex; height: 21px; }
.pos-tabs .panel-tab { width: 120px; height: 21px; letter-spacing: -0.050px; }
.pos-tabs .panel-tab svg:first-of-type { margin-left: 5px; }
.pending { width: 114px; height: 22px; padding-left: 3px; background: var(--dark); color: #b8bdc1; font-weight: 500; line-height: 21px; text-align: center; letter-spacing: -0.100px; z-index: 1; }

.pos-head {
  display: grid;
  grid-template-columns: 251px 69.500px 67px 96px 52px 66px 68px 87px 89px 81px 93px 92px 69px 58px;
  height: 74px;
  padding: 5px 0 0 15.500px;
  font-size: 8.200px;
  line-height: 13px;
  color: #59616a;
}

.pos-head span { letter-spacing: -0.150px; }
.pos-head span i { font-style: italic; }
.pos-head button { height: 14px; border: 0; border-radius: 2px; background: #aa232a; color: #d5d5d5; font: 500 8px Roboto, sans-serif; }
.pos-head .caret { margin-left: 7px; vertical-align: 1px; transform: scale(.7); }

/* Status bar */
.status { display: flex; gap: 7px; height: 32px; margin-top: 6px; }
.balance { position: relative; display: flex; width: 1235px; }
.real { width: 87px; background: #00855a; color: #ccd3cf; font-size: 11.300px; font-weight: 500; line-height: 33px; text-align: center; }
.stat { display: flex; flex-direction: column; padding-top: 4px; line-height: 13px; font-size: 9.500px; letter-spacing: -0.150px; }
.stat em { margin-top: 1px; font-size: 8.500px; letter-spacing: 0.200px; color: #257c56; }
.s1 { width: 81px; margin-left: 13.500px; }
.s2 { width: 64px; }
.s3, .s4 { position: relative; width: 54px; }
.s3::after, .s4::after { content: ""; position: absolute; top: 18px; left: 0; right: 0; height: 1px; background: #90959b; }
.s4 { text-align: right; margin-right: 26px; }
.profit { display: flex; align-items: center; gap: 3px; margin: 0 15px 0 auto; font-size: 11.200px; font-weight: 500; }
.profit svg { color: #737a81; }
.profit em { color: #197b50; }
.help { display: flex; align-items: center; justify-content: center; width: 25px; }
.help b { width: 15px; height: 15px; border-radius: 50%; background: #0d1219; color: #ddd; font-size: 11px; font-weight: 700; line-height: 15px; text-align: center; }

/* Layout hint */
.tooltip { position: absolute; left: 907px; top: 26px; width: 170px; height: 51px; padding: 8px 7px; background: var(--panel); border: 1px solid #969a9f; border-radius: 3px; box-shadow: 0 1px 2px #8b9096; font-size: 8.500px; line-height: 11.300px; letter-spacing: -0.100px; }
.tooltip svg { position: absolute; right: 8px; top: 8px; color: #858a90; }
.tooltip::before { content: ""; position: absolute; right: 7px; top: -5px; border: 5px solid transparent; border-top: 0; border-bottom-color: var(--panel); }

/* Order window */
.modal { position: absolute; left: 476px; top: 61px; width: 324px; height: 329px; background: #fff; color: #414d57; }
.modal header { height: 54px; padding-top: 12px; background: var(--slate); color: #fff; }
.title { display: flex; align-items: center; height: 20px; padding-left: 102px; }
.title h1 { font-size: 17.800px; font-weight: 400; letter-spacing: 1.600px; }
.title small { margin: -4px 10px 0 9px; font-size: 8px; letter-spacing: 1px; color: #98a4a9; }
.title svg { stroke-width: 1.100; }
.modal header p { font-size: 7.600px; font-weight: 700; line-height: 8px; text-align: center; letter-spacing: -0.120px; }
.close { position: absolute; left: 301px; top: 12px; color: #c9d0d3; stroke-width: 1.400; }
.modal-tabs { display: flex; height: 26px; background: var(--slate); color: #fff; font-weight: 500; line-height: 26px; text-align: center; letter-spacing: -0.050px; }
.modal-tabs span { width: 162px; padding-left: 3px; }
.modal-tabs .on { background: #fff; color: #414d57; }

.form { padding: 20px 14px 0; }
.form label { font-size: 10px; font-weight: 500; }
.labels { display: flex; }
.l1 { align-items: flex-end; height: 27px; line-height: 12.500px; padding-bottom: 1px; }
.l1 > label:first-child { width: 99px; padding-bottom: 1px; }
.l1 label:last-child { padding-bottom: 1px; }
.two { width: 79.500px; margin-left: 11px; }
.check { width: 11px; height: 11px; border: 1px solid #b5b8ba; border-radius: 2px; background: #fff; }
.l1 .check { margin-bottom: 1.500px; }
.fields { display: flex; }
.input { display: flex; flex: none; align-items: center; height: 22.500px; font-size: 9.500px; border: 1px solid #f4f4f4; }
.dark { background: var(--slate); border-color: #25343c; color: #fff; padding: 0 4px 2px 7px; letter-spacing: -0.200px; }
.spin { margin-left: auto; margin-bottom: -3px; }
.text-cursor { width: 1px; height: 11px; background: #fff; }
.f1 { gap: 10.500px; margin-top: 2.500px; }
.f1 .input { width: 90px; }
.off.input { background: #f5f5f5; border: 0; color: #d0d0d0; justify-content: flex-end; padding-right: 5px; }
.l2 { align-items: center; height: 22px; padding: 7px 0 0 3px; }
.l2 small { font-size: 7.500px; }
.l2 label:nth-child(1) { width: 63px; }
.l2 label:nth-child(2) { width: 91.500px; letter-spacing: -0.060px; }
.l2 small:nth-child(3) { width: 27px; }
.l2 label:nth-child(4) { width: 90.500px; }
.f2 .dark { width: 52px; margin-right: 12px; border-color: var(--slate); }
.f2 .ro { width: 109px; margin-right: 11px; padding: 0 7px 2px; color: #aaa; }

.costs { display: flex; margin: 10px -9px 0; line-height: 11px; }
.costs div { display: flex; flex-direction: column; align-items: center; flex: none; width: 77.400px; padding-left: 1px; font-size: 8.500px; color: #68727a; }
.costs b { font-weight: 700; font-size: 8.300px; line-height: 12px; color: #4a565f; }
.costs .pip span { margin-top: 3px; }
.stops { display: flex; align-items: center; gap: 5px; height: 12px; margin: 19px 2.500px 0 2px; }
.stops .tp { margin-left: auto; }
.actions { display: flex; gap: 6px; margin-top: 12px; }
.actions button { width: 143px; height: 37px; border: 0; border-radius: 3px; color: #fff; font: 500 12.500px Roboto, sans-serif; }
.red { background: #e53834; }
.green { background: #05a26a; }
.hand { position: absolute; left: 231px; top: 296px; stroke-width: .8; }

/* Risk warning */
.disclaimer { width: 1278px; height: 37px; padding: 3px 9px; background: #fdf6cd; border-bottom: 1px solid #d8d2ab; color: #3a382f; font: 11.800px/14.500px "Open Sans", "Noto Sans", sans-serif; box-shadow: inset 0 3px 3px -2px #b8b28f; }
.disclaimer b { font-weight: 700; color: #26241d; }
.d1 { letter-spacing: -0.360px; }
.d1 b { letter-spacing: -0.420px; }
.d2 { letter-spacing: -0.290px; }
.d2 b { letter-spacing: -0.410px; }

/* Taskbar */
.taskbar { display: flex; height: 33px; background: #3a382f; }
.taskbar > span { display: flex; align-items: center; justify-content: center; width: 41.300px; height: 33px; }
.taskbar .open { background: linear-gradient(#76b2e4, #76b2e4) center bottom / 34px 2px no-repeat; }
.taskbar .active { background: linear-gradient(#76b2e4, #76b2e4) center bottom / 41px 2px no-repeat, #66645d; }
.office { width: 18px; height: 18px; border-right: 5px solid #e9edf2; border-radius: 1px; color: #fff; font-size: 13px; font-weight: 700; line-height: 18px; text-align: center; }
.ppt { background: #cb4c2a; }
.word { background: #2a5ca8; font-size: 12px; }
.tray { display: flex; align-items: center; gap: 7px; margin: 0 20px 0 auto; color: #f0f0f0; }
.tray b { margin: 0 11px 0 0; font: 400 10.500px "Open Sans", sans-serif; letter-spacing: -0.300px; }
```
FILE: chart.js
```js
const NS = 'http://www.w3.org/2000/svg';
const plot = document.getElementById('plot');

function add(name, attrs, parent, text) {
  const el = document.createElementNS(NS, name);
  for (const key in attrs) el.setAttribute(key, attrs[key]);
  if (text) el.textContent = text;
  parent.appendChild(el);
  return el;
}

// [x, high, body top, body bottom, low, rising], three units to a pixel
const opening = [
  [102,226,230,251,256,0],[119,230,240,250,253,1],[134,228,235,246,250,1],[152,212,218,244,257,1],
  [168,218,219,251,252,0],[184,235,248,254,254,0],[202,230,231,254,256,1],[217,228,231,251,251,0],
  [235,240,245,254,266,0],[251,206,210,257,260,1],[267,208,210,281,283,0],[285,203,207,281,283,1],
  [300,203,207,249,252,0],[318,246,246,329,336,0],[334,307,322,330,342,1],[350,315,320,359,398,0],
  [368,322,350,360,398,0],[384,280,286,359,384,1]
];
const recent = [
  [18,113,113,135,135,0],[33,115,115,135,140,1],[49,88,92,118,120,1],[65,85,92,168,180,0],
  [82,145,165,188,215,0],[98,150,187,222,225,0],[116,213,217,243,265,0],[131,210,217,240,255,1],
  [148,210,213,257,258,0],[165,235,255,278,290,0],[181,228,240,278,297,1],[197,185,213,244,244,1],
  [215,187,211,294,296,0],[231,270,291,329,335,0],[249,282,294,329,333,1],[264,263,294,311,311,0],
  [281,288,289,311,314,1],[298,288,289,339,339,0],[314,328,333,339,342,1],[332,323,327,337,338,1],
  [348,310,315,332,336,1],[364,312,315,345,370,0],[381,323,338,364,374,0],[397,298,300,364,364,1],
  [415,257,262,303,307,1],[431,262,262,294,300,0],[447,287,291,307,308,0],[464,272,291,307,308,1],
  [480,183,207,294,315,1],[498,143,151,209,223,1],[514,105,117,155,167,1],[530,100,117,137,149,0],
  [547,80,121,137,137,1],[564,121,121,185,187,0],[580,150,167,187,202,1],[597,110,133,170,197,1],
  [613,105,132,193,207,0],[631,165,189,196,208,0],[647,170,187,196,200,1],[662,156,157,191,193,1],
  [681,123,129,161,163,1],[697,120,129,139,141,1],[714,127,129,139,142,0],[730,123,128,142,158,1],
  [746,127,129,149,150,0],[763,145,149,163,183,0],[780,149,160,194,196,0],[797,190,192,209,221,0],
  [813,202,205,214,216,0],[829,203,209,215,221,0],[847,210,211,232,245,0],[862,215,218,230,251,1],
  [881,189,193,222,230,1],[896,150,151,197,241,1],[912,133,138,154,158,1],[931,121,137,158,164,0],
  [946,148,152,173,192,0],[961,153,168,193,203,0],[979,92,98,193,204,1],[995,48,66,101,116,1]
];

function candles(data, x0, y0) {
  const group = add('g', { transform: `translate(${x0} ${y0}) scale(0.33333)` }, plot);
  data.forEach(([x, high, top, bottom, low, rising]) => {
    const g = add('g', { class: rising ? 'g' : 'r-c' }, group);
    add('path', { d: `M${x} ${high}V${low}`, 'stroke-width': 2.5 }, g);
    add('rect', { x: x - 5, y: top, width: 10, height: bottom - top, 'stroke-width': 1.5 }, g);
  });
}
candles(opening, 345, 70);
candles(recent, 795, 330);

const prices = [[1.20963, 138], [1.20741, 165], [1.20519, 192], [1.20297, 218.5], [1.20075, 245],
  [1.19853, 272], [1.19631, 299], [1.19409, 326], [1.18965, 380], [1.18743, 407], [1.18521, 434], [1.18298, 457.5]];
prices.forEach(([price, y]) => add('text', { x: 1225.5, y: y + 3.7, textLength: 35 }, plot, price.toFixed(5)));
add('text', { x: 1225.5, y: 357.5, textLength: 35, class: 'tag-text' }, plot, '1.19190');

[['02.03.2021 23:00', 379, 75.5], ['03.03 17:00', 478.5, 51], ['04.03 11:00', 578.5, 51], ['05.03 05:00', 678, 51],
  ['08.03 00:00', 778, 51], ['08.03 18:00', 878, 51], ['09.03 12:00', 978, 51], ['10.03 06:00', 1078, 51],
  ['11.03 00:00', 1177.5, 51]].forEach(([label, x, w]) => add('text', { x, y: 471, textLength: w }, plot, label));

const timer = add('text', { x: 1161, y: 449.5, style: 'font-size:11px', textLength: 57 }, plot);
[['33', '#b27a1e'], ['m ', '#888d92'], ['36', '#b27a1e'], ['sec.', '#888d92']]
  .forEach(([t, color]) => add('tspan', { style: `fill:${color}` }, timer, t));
```
